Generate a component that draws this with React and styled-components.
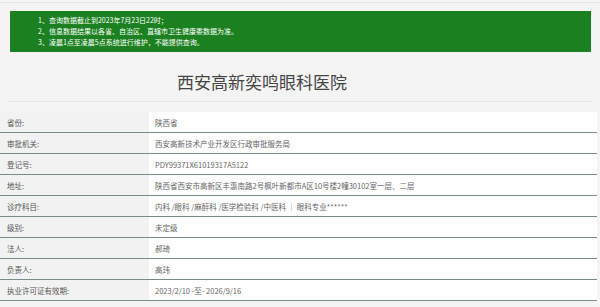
import React from "react";
import styled, { createGlobalStyle } from "styled-components";

const rows = [
  ["省份:", "陕西省"],
  ["审批机关:", "西安高新技术产业开发区行政审批服务局"],
  ["登记号:", "PDY99371X61019317A5122"],
  ["地址:", "陕西省西安市高新区丰惠南路2号枫叶新都市A区10号楼2幢30102室一层、二层"],
  ["诊疗科目:", "内科 /眼科 /麻醉科 /医学检验科 /中医科 ｜ 眼科专业******"],
  ["级别:", "未定级"],
  ["法人:", "郝琦"],
  ["负责人:", "高玮"],
  ["执业许可证有效期:", "2023/2/10 -至- 2026/9/16"],
];

const notes = [
  "1、查询数据截止到2023年7月23日22时；",
  "2、信息数据结果以各省、自治区、直辖市卫生健康委数据为准。",
  "3、凌晨1点至凌晨5点系统进行维护，不能提供查询。",
];

const App = () => {
  return (
    <>
      <GlobalStyle />
      <Page>
        <Banner>
          {notes.map((n, i) => (
            <Note key={i}>{n}</Note>
          ))}
        </Banner>
        <Title>西安高新奕鸣眼科医院</Title>
        <Table>
          {rows.map(([label, value], i) => (
            <Row key={i}>
              <Label>{label}</Label>
              <Value>{value}</Value>
            </Row>
          ))}
        </Table>
      </Page>
    </>
  );
};

const GlobalStyle = createGlobalStyle`
  html, body {
    margin: 0;
    padding: 0;
    background: #f4f4f4;
  }
  body {
    font-family: "Noto Sans CJK SC", "Noto Sans", sans-serif;
  }
`;

const Page = styled.div`
  width: 600px;
  height: 307px;
  overflow: hidden;
  border-top: 1px solid #e6e6e6;
  margin-top: 2px;
  box-sizing: border-box;
`;

const Banner = styled.div`
  margin: 8px 9px 0 10px;
  height: 41px;
  box-sizing: border-box;
  background: #1b8120;
  padding: 4px 0 0 28px;
  display: flex;
  flex-direction: column;
`;

const Note = styled.div`
  color: #ffffff;
  font-size: 7px;
  line-height: 11px;
  white-space: nowrap;
`;

const Title = styled.h1`
  margin: 0 7px;
  height: 50px;
  box-sizing: border-box;
  padding: 15px 76px 0 0;
  border-bottom: 1px solid #e6e6e6;
  text-align: center;
  font-size: 17px;
  font-weight: 400;
  line-height: 30px;
  color: #444;
`;

const Table = styled.div`
  margin-top: 10px;
  width: 597px;
  display: flex;
  flex-direction: column;
`;

const Row = styled.div`
  display: grid;
  grid-template-columns: 149px 1fr;
  height: 21px;
  border-bottom: 1px solid #7b8b8a;
  box-sizing: border-box;
`;

const Label = styled.div`
  background: #f2f2f2;
  padding-left: 7px;
  display: flex;
  align-items: center;
  font-size: 7.5px;
  color: #555;
  white-space: nowrap;
`;

const Value = styled.div`
  background: #ffffff;
  padding-left: 6px;
  display: flex;
  align-items: center;
  font-size: 7.5px;
  color: #666;
  white-space: nowrap;
`;

export default App;
